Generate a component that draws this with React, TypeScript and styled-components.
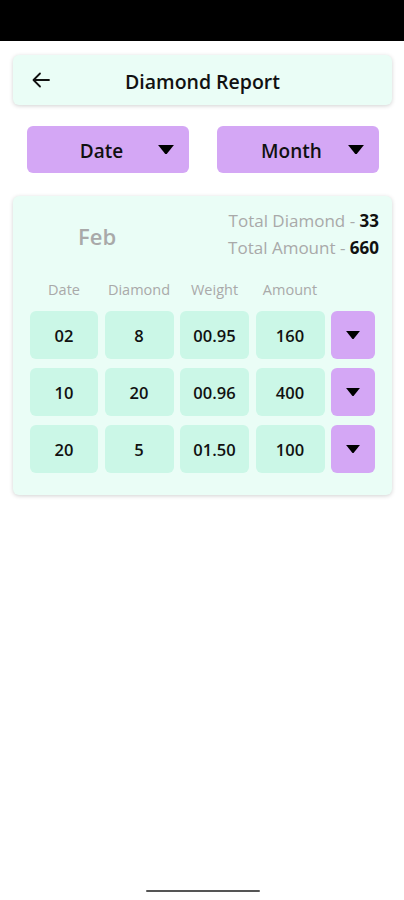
import styled, { createGlobalStyle } from 'styled-components'

const colors = {
  mint: '#eafdf6',
  cell: '#cbf7e7',
  lilac: '#d4a7f5',
  grey: '#a9a9a9',
  text: '#111111',
}

const GlobalStyle = createGlobalStyle`
  html, body {
    margin: 0;
    padding: 0;
    background: #ffffff;
    font-family: "Open Sans", "Noto Sans", sans-serif;
  }
`

const Screen = styled.div`
  width: 404px;
  height: 900px;
  display: flex;
  flex-direction: column;
  background: #ffffff;
  position: relative;
  overflow: hidden;
`

const StatusBar = styled.div`
  height: 41px;
  background: #000000;
  flex-shrink: 0;
`

const Content = styled.div`
  display: flex;
  flex-direction: column;
  padding: 14px 12px 0 13px;
`

const Header = styled.div`
  height: 50px;
  display: flex;
  align-items: center;
  padding: 0 19px;

  background-color: ${colors.mint};
  border-radius: 6px;
  box-shadow: 0 1px 4px 0 rgba(0, 0, 0, 0.18);
`

const BackButton = styled.div`
  display: flex;
  align-items: center;
  width: 18px;
  height: 18px;
`

const Title = styled.span`
  flex: 1;
  text-align: center;
  font-size: 19.5px;
  font-weight: 600;
  color: ${colors.text};
  margin-right: 18px;
  padding-top: 3px;
`

const Filters = styled.div`
  display: flex;
  justify-content: space-between;
  padding: 21px 13px 0 14px;
`

const Select = styled.div`
  width: 162px;
  height: 47px;
  display: flex;
  align-items: center;
  padding: 0 15px 0 18px;
  box-sizing: border-box;

  background-color: ${colors.lilac};
  border-radius: 6px;
  font-size: 19px;
  font-weight: 600;
  color: ${colors.text};

  span {
    flex: 1;
    text-align: center;
    padding-top: 2px;
  }
`

const ReportCard = styled.div`
  margin-top: 23px;
  padding: 13px 13px 22px 17px;
  display: flex;
  flex-direction: column;

  background-color: ${colors.mint};
  border-radius: 6px;
  box-shadow: 0 1px 4px 0 rgba(0, 0, 0, 0.18);
`

const Summary = styled.div`
  display: flex;
  justify-content: space-between;
  align-items: center;
`

const MonthLabel = styled.span`
  font-size: 22px;
  font-weight: 600;
  color: ${colors.grey};
  margin-left: 48px;
  padding-top: 2px;
`

const Totals = styled.div`
  display: flex;
  flex-direction: column;
  align-items: flex-end;
  gap: 3px;
`

const TotalLine = styled.span`
  font-size: 17px;
  line-height: 24px;
  color: ${colors.grey};
  font-weight: 500;

  b {
    color: ${colors.text};
    font-weight: 700;
  }
`

const Grid = styled.div`
  display: grid;
  grid-template-columns: 68px 69px 69px 69px 44px;
  column-gap: 6.5px;
  row-gap: 9px;
  margin-top: 20px;
`

const HeadCell = styled.span`
  font-size: 14.5px;
  color: ${colors.grey};
  text-align: center;
  line-height: 20px;
  margin-bottom: 2px;
`

const Cell = styled.div`
  height: 48px;
  display: flex;
  align-items: center;
  justify-content: center;

  background-color: ${colors.cell};
  border-radius: 6px;
  font-size: 16.5px;
  font-weight: 600;
  color: ${colors.text};
`

const RowButton = styled(Cell)`
  background-color: ${colors.lilac};
`

const HomeBar = styled.div`
  position: absolute;
  bottom: 8px;
  left: 146px;
  width: 114px;
  height: 2px;
  background: #555555;
  border-radius: 1px;
`

const Triangle = ({ size }: { size: number }) => (
  <svg width={size} height={size * 0.62} viewBox="0 0 16 10">
    <polygon points="0,0 16,0 8,10" fill="#000" />
  </svg>
)

const rows = [
  { date: '02', diamond: '8', weight: '00.95', amount: '160' },
  { date: '10', diamond: '20', weight: '00.96', amount: '400' },
  { date: '20', diamond: '5', weight: '01.50', amount: '100' },
]

export default function App() {
  return (
    <Screen>
      <GlobalStyle />
      <StatusBar />
      <Content>
        <Header>
          <BackButton>
            <svg width="18" height="16" viewBox="0 0 18 16" fill="none" stroke="#111" strokeWidth="1.8" strokeLinecap="round" strokeLinejoin="round">
              <path d="M17 8H2" />
              <path d="M8 1.5L1.5 8L8 14.5" />
            </svg>
          </BackButton>
          <Title>Diamond Report</Title>
        </Header>

        <Filters>
          <Select>
            <span>Date</span>
            <Triangle size={16} />
          </Select>
          <Select>
            <span>Month</span>
            <Triangle size={16} />
          </Select>
        </Filters>

        <ReportCard>
          <Summary>
            <MonthLabel>Feb</MonthLabel>
            <Totals>
              <TotalLine>
                Total Diamond - <b>33</b>
              </TotalLine>
              <TotalLine>
                Total Amount - <b>660</b>
              </TotalLine>
            </Totals>
          </Summary>

          <Grid>
            <HeadCell>Date</HeadCell>
            <HeadCell>Diamond</HeadCell>
            <HeadCell>Weight</HeadCell>
            <HeadCell>Amount</HeadCell>
            <span />
            {rows.map((r) => [
              <Cell key={r.date + 'd'}>{r.date}</Cell>,
              <Cell key={r.date + 'n'}>{r.diamond}</Cell>,
              <Cell key={r.date + 'w'}>{r.weight}</Cell>,
              <Cell key={r.date + 'a'}>{r.amount}</Cell>,
              <RowButton key={r.date + 'b'}>
                <Triangle size={14} />
              </RowButton>,
            ])}
          </Grid>
        </ReportCard>
      </Content>
      <HomeBar />
    </Screen>
  )
}
